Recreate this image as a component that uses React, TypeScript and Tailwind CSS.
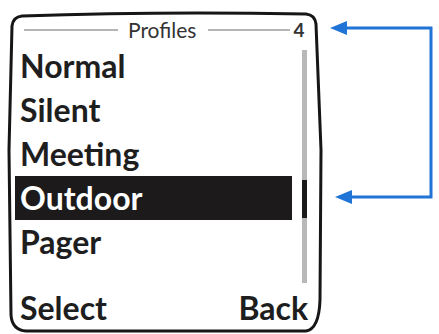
import React from "react";

const items = ["Normal", "Silent", "Meeting", "Outdoor", "Pager"];

export default function App() {
  return (
    <div className="relative w-[439px] h-[334px] bg-white overflow-hidden font-['Lato',sans-serif] text-[#1e1e1e]">
      <svg className="absolute inset-0" width="439" height="334" viewBox="0 0 439 334">
        <path
          d="M 22 16 Q 160 11 306 14 Q 315 15 316 24 L 321 150 L 320 300 Q 319 329 306 331 L 26 331 Q 12 330 11 315 L 9 150 L 12 26 Q 13 17 22 16 Z"
          fill="none"
          stroke="#161616"
          strokeWidth="3"
        />
        <path d="M 342 28 L 431 28 L 431 197 L 348 197" fill="none" stroke="#1f74d6" strokeWidth="3" />
        <path d="M 330 28 L 347 21 L 347 35 Z" fill="#1f74d6" />
        <path d="M 335 197 L 352 190 L 352 204 Z" fill="#1f74d6" />
      </svg>
      <div className="relative flex flex-col pl-[15px] pt-[22px] w-[320px]">
        <div className="flex items-center h-[16px]">
          <div className="ml-[9px] w-[94px] h-[2px] bg-[#b5b5b5]" />
          <span className="ml-[10px] text-[21px] leading-[16px] text-[#333]">Profiles</span>
          <div className="ml-[12px] w-[82px] h-[2px] bg-[#b5b5b5]" />
          <span className="ml-[3px] text-[19px] leading-[16px] font-bold text-[#333]">4</span>
        </div>
        <div className="flex mt-[6px]">
          <div className="flex flex-col w-[277px]">
            {items.map((t) => (
              <div
                key={t}
                className={
                  t === "Outdoor"
                    ? "h-[44px] pl-[5px] text-[32px] leading-[44px] font-bold bg-[#1c1a1b] text-white"
                    : "h-[44px] pl-[5px] text-[32px] leading-[44px] font-bold"
                }
              >
                {t}
              </div>
            ))}
          </div>
          <div className="relative ml-[10px] mt-[6px] w-[5px] h-[233px] bg-[#b8b8b8]">
            <div className="absolute left-0 top-[130px] w-[5px] h-[38px] bg-[#1c1a1b]" />
          </div>
        </div>
        <div className="flex justify-between w-[293px] pl-[5px] mt-[3px] text-[32px] leading-[44px] font-bold">
          <span>Select</span>
          <span>Back</span>
        </div>
      </div>
    </div>
  );
}
